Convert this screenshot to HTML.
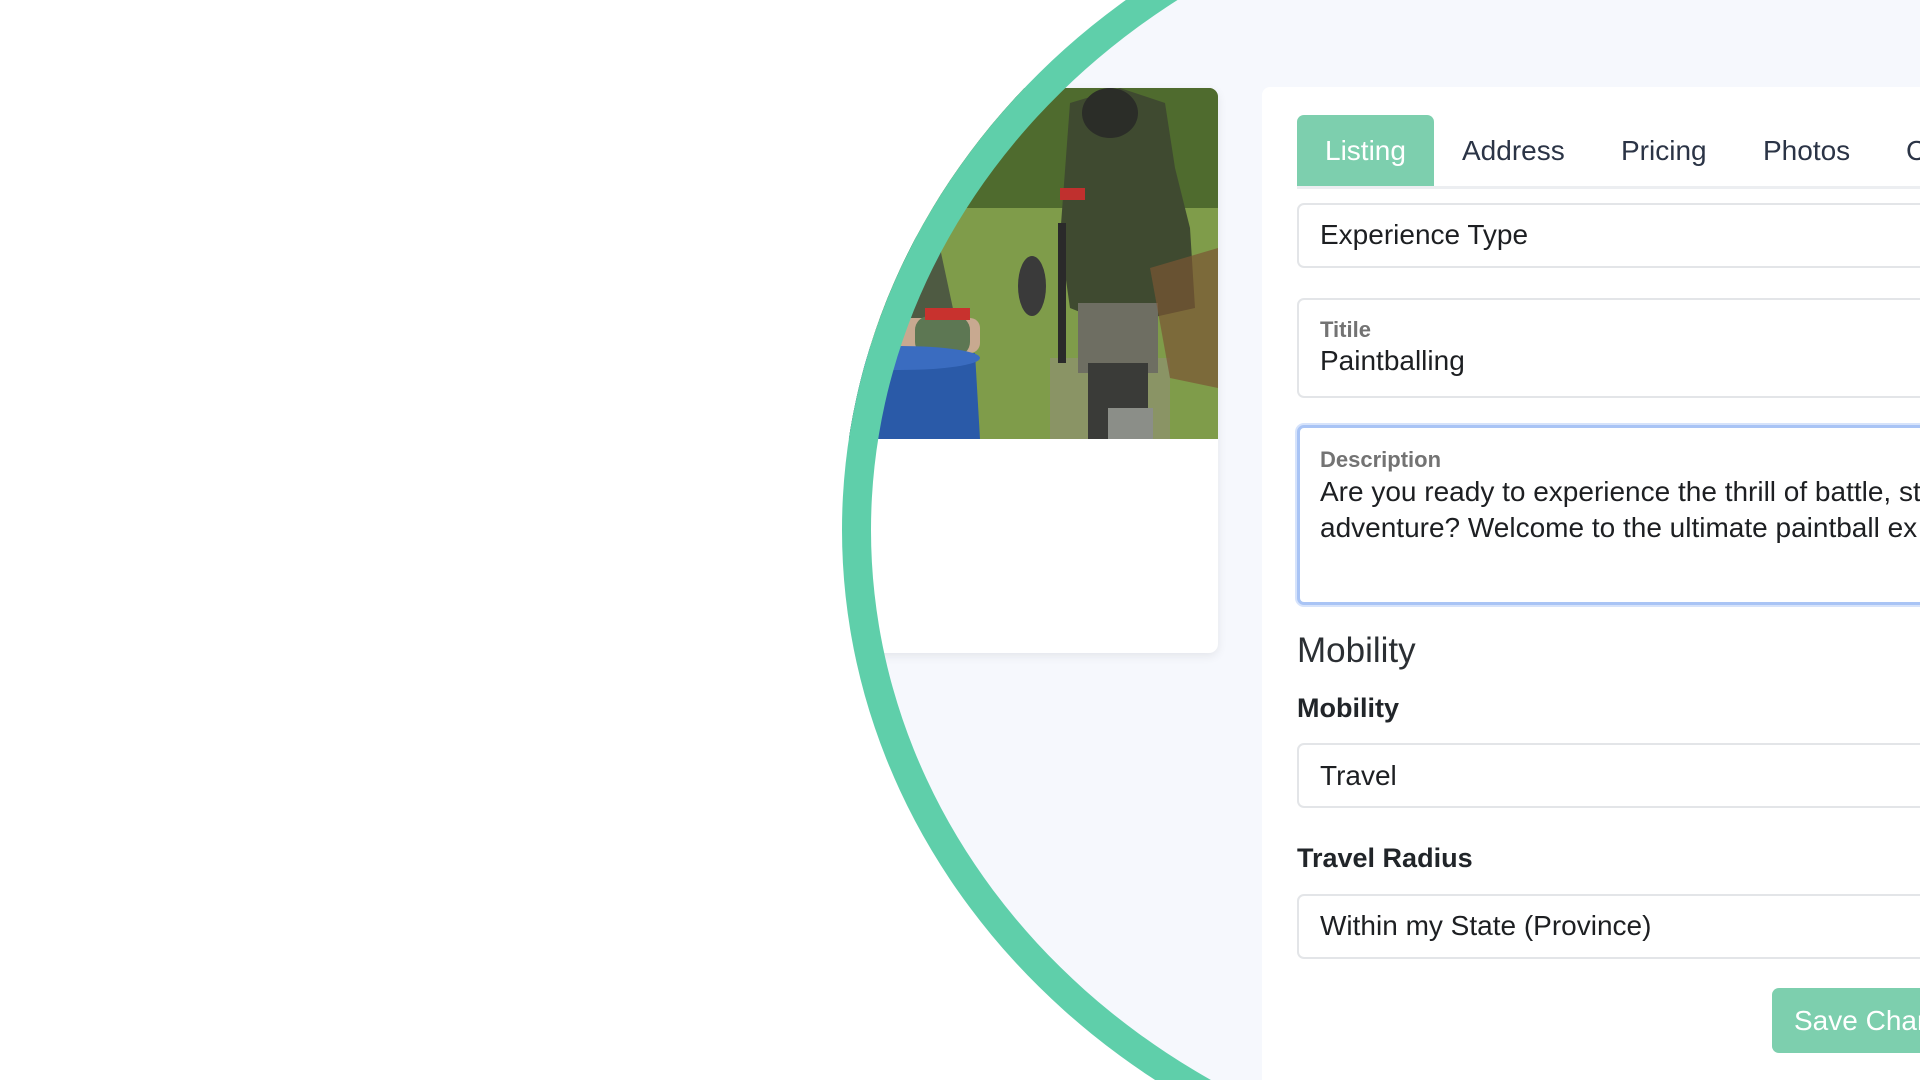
<!DOCTYPE html>
<html style="width:1920px;height:1080px;overflow:hidden"><head><meta charset="utf-8"><style>
*{box-sizing:border-box;margin:0;padding:0}
body{width:1920px;height:1080px;background:#fff;position:relative;overflow:hidden;font-family:"Liberation Sans",Arial,sans-serif}
.wrap{position:absolute;left:0;top:0;width:1920px;height:1080px;overflow:hidden}
.clip{position:absolute;left:842px;top:-150px;width:1520px;height:1360px;border-radius:50%;overflow:hidden;background:#f6f8fd}
.inner{position:absolute;left:-842px;top:150px;width:1920px;height:1080px}
.ring{position:absolute;left:842px;top:-150px;width:1520px;height:1360px;border-radius:50%;border:29px solid #5fcfaa}
.card{position:absolute;left:820px;top:88px;width:398px;height:565px;background:#fff;border-radius:9px;box-shadow:0 3px 10px rgba(0,0,0,.08);overflow:hidden}
.panel{position:absolute;left:1262px;top:87px;width:658px;height:993px;background:#fff;border-radius:8px 0 0 0}
.tab{position:absolute;top:115px;height:72px;font-size:28px;color:#2b3446;line-height:72px}
.tabline{position:absolute;left:1297px;top:186px;width:623px;height:3px;background:#eceef1}
.inp{position:absolute;left:1297px;width:650px;border:2px solid #e3e5e8;border-radius:7px;background:#fff}
.txt{position:absolute;left:1320px;font-size:28px;color:#1d1f22;white-space:nowrap}
.lbl{position:absolute;left:1320px;font-size:22px;color:#737373;font-weight:bold}
.bl{position:absolute;left:1297px;font-size:27px;font-weight:bold;color:#212529}
</style></head><body><div class="wrap">
<div class="clip"><div class="inner">
 <div class="card">
  <svg width="398" height="351" viewBox="0 0 398 351" style="display:block">
   <rect width="398" height="351" fill="#6b8a3e"/>
   <rect x="0" y="0" width="398" height="120" fill="#4f6b2e"/>
   <rect x="0" y="120" width="398" height="231" fill="#7f9c4a"/>
   <rect x="230" y="270" width="120" height="81" fill="#8a9465"/>
   <path d="M250 15 L300 0 L345 15 L355 80 L370 140 L375 220 L330 230 L300 240 L250 220 L240 150 Z" fill="#3f4a30"/>
   <ellipse cx="290" cy="25" rx="28" ry="25" fill="#2b2d28"/>
   <rect x="258" y="215" width="80" height="70" fill="#6e6e62"/>
   <rect x="268" y="275" width="60" height="76" fill="#3a3b38"/>
   <rect x="288" y="320" width="45" height="31" fill="#8b8e88"/>
   <rect x="240" y="100" width="25" height="12" fill="#c0302e"/>
   <rect x="238" y="135" width="8" height="140" fill="#2a2a2a"/>
   <ellipse cx="212" cy="198" rx="14" ry="30" fill="#3a3a3a"/>
   <path d="M330 180 L398 160 L398 300 L350 290 Z" fill="#7a5533" opacity=".7"/>
   <path d="M60 130 L120 160 L135 230 L110 250 L40 240 L20 180 Z" fill="#4e5a42"/>
   <rect x="30" y="230" width="130" height="35" rx="10" fill="#c8a990"/>
   <rect x="95" y="228" width="55" height="40" rx="14" fill="#5d7753"/>
   <rect x="105" y="220" width="45" height="12" fill="#c8322e"/>
   <path d="M0 270 L155 265 L160 351 L0 351 Z" fill="#2a5aa8"/>
   <ellipse cx="80" cy="270" rx="80" ry="12" fill="#3a6cc0"/>
  </svg>
 </div>
 <div class="panel"></div>
<div style="position:absolute;left:1297px;top:115px;width:137px;height:72px;background:#7dcfae;border-radius:7px 7px 0 0"></div>
<div class="tabline"></div>
<div class="tab" style="left:1325px;color:#fff">Listing</div>
<div class="tab" style="left:1462px">Address</div>
<div class="tab" style="left:1621px">Pricing</div>
<div class="tab" style="left:1763px">Photos</div>
<div class="tab" style="left:1906px">C</div>
<div class="inp" style="top:203px;height:65px"></div>
<div class="txt" style="top:219px">Experience Type</div>
<div class="inp" style="top:298px;height:100px"></div>
<div class="lbl" style="top:317px">Titile</div>
<div class="txt" style="top:345px">Paintballing</div>
<div class="inp" style="top:425px;height:180px;border:3px solid #a9c4f5;box-shadow:0 0 0 2px #d6e3fb"></div>
<div class="lbl" style="top:447px">Description</div>
<div class="txt" style="top:476px">Are you ready to experience the thrill of battle, st</div>
<div class="txt" style="top:512px">adventure? Welcome to the ultimate paintball ex</div>
<div style="position:absolute;left:1297px;top:631px;font-size:35px;color:#2b2f33">Mobility</div>
<div class="bl" style="top:693px">Mobility</div>
<div class="inp" style="top:743px;height:65px"></div>
<div class="txt" style="top:760px">Travel</div>
<div class="bl" style="top:843px">Travel Radius</div>
<div class="inp" style="top:894px;height:65px"></div>
<div class="txt" style="top:910px">Within my State (Province)</div>
<div style="position:absolute;left:1772px;top:988px;width:200px;height:65px;background:#7dcfae;border-radius:7px;color:#fff;font-size:28px;line-height:65px;padding-left:22px;white-space:nowrap">Save Changes</div>
</div></div>
<div class="ring"></div>
</div></body></html>
